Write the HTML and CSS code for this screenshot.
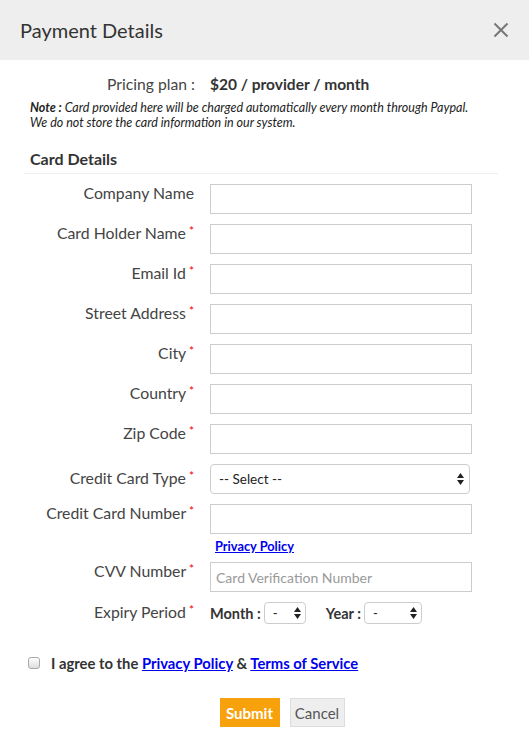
FILE: index.html
```html
<!DOCTYPE html>
<html lang="en">
<head>
    <meta charset="UTF-8">
    <meta name="viewport" content="width=device-width, initial-scale=1.0">
    <title>Payment Details</title>
    <link rel="stylesheet" href="styles.css">
</head>
<body>

<div class="modal">
    <div class="modal-header">
        <h2>Payment Details</h2>
        <button class="close-button" aria-label="Close">
            <svg width="16" height="16" viewBox="0 0 16 16"><path d="M1.5 1.5 L14.5 14.5 M14.5 1.5 L1.5 14.5" stroke="#777" stroke-width="2" fill="none"/></svg>
        </button>
    </div>

    <div class="modal-body">
        <div class="plan">
            <span class="plan-label">Pricing plan :</span>
            <span class="plan-value">$20 / provider / month</span>
        </div>
        <p class="note"><b>Note :</b> Card provided here will be charged automatically every month through Paypal.<br>We do not store the card information in our system.</p>

        <h3 class="section-title">Card Details</h3>

        <form class="card-form">
            <div class="form-row">
                <label>Company Name</label>
                <input type="text">
            </div>
            <div class="form-row">
                <label>Card Holder Name <span class="req">*</span></label>
                <input type="text">
            </div>
            <div class="form-row">
                <label>Email Id <span class="req">*</span></label>
                <input type="text">
            </div>
            <div class="form-row">
                <label>Street Address <span class="req">*</span></label>
                <input type="text">
            </div>
            <div class="form-row">
                <label>City <span class="req">*</span></label>
                <input type="text">
            </div>
            <div class="form-row">
                <label>Country <span class="req">*</span></label>
                <input type="text">
            </div>
            <div class="form-row">
                <label>Zip Code <span class="req">*</span></label>
                <input type="text">
            </div>
            <div class="form-row select-row">
                <label>Credit Card Type <span class="req">*</span></label>
                <div class="select-box wide">
                    <span>-- Select --</span>
                    <svg width="7" height="12" viewBox="0 0 7 12"><path d="M3.5 0 L7 5 L0 5 Z M3.5 12 L7 7 L0 7 Z" fill="#222"/></svg>
                </div>
            </div>
            <div class="form-row number-row">
                <label>Credit Card Number <span class="req">*</span></label>
                <div class="field-stack">
                    <input type="text">
                    <a href="#" class="small-link">Privacy Policy</a>
                </div>
            </div>
            <div class="form-row">
                <label>CVV Number <span class="req">*</span></label>
                <input type="text" placeholder="Card Verification Number">
            </div>
            <div class="form-row expiry-row">
                <label>Expiry Period <span class="req">*</span></label>
                <div class="expiry">
                    <b>Month :</b>
                    <div class="select-box mini month">
                        <span>-</span>
                        <svg width="7" height="12" viewBox="0 0 7 12"><path d="M3.5 0 L7 5 L0 5 Z M3.5 12 L7 7 L0 7 Z" fill="#222"/></svg>
                    </div>
                    <b class="year-label">Year :</b>
                    <div class="select-box mini year">
                        <span>-</span>
                        <svg width="7" height="12" viewBox="0 0 7 12"><path d="M3.5 0 L7 5 L0 5 Z M3.5 12 L7 7 L0 7 Z" fill="#222"/></svg>
                    </div>
                </div>
            </div>
        </form>

        <div class="agree">
            <span class="checkbox"></span>
            <span>I agree to the <a href="#">Privacy Policy</a> &amp; <a href="#">Terms of Service</a></span>
        </div>

        <div class="actions">
            <button class="submit-button">Submit</button>
            <button class="cancel-button">Cancel</button>
        </div>
    </div>
</div>

</body>
</html>
```

FILE: styles.css
```css
body {
    font-family: Lato, "Open Sans", sans-serif;
    background-color: #fff;
    color: #333;
    margin: 0;
    padding: 0;
}
.modal {
    width: 529px;
}
.modal-header {
    background-color: #eeeeee;
    height: 60px;
    display: flex;
    align-items: center;
    justify-content: space-between;
    padding: 0 20px;
}
.modal-header h2 {
    margin: 0;
    font-size: 20px;
    font-weight: normal;
    color: #333;
}
.close-button {
    background: none;
    border: none;
    padding: 0;
    display: flex;
}
.modal-body {
    padding: 14px 24px 0 24px;
}
.plan {
    display: flex;
    align-items: baseline;
    line-height: 20px;
}
.plan-label {
    width: 171px;
    text-align: right;
    font-size: 15.7px;
    color: #444;
}
.plan-value {
    margin-left: 15px;
    font-weight: bold;
    font-size: 15.5px;
    color: #333;
}
.note {
    margin: 6px 0 0 6px;
    font-size: 12.5px;
    font-style: italic;
    line-height: 15px;
    color: #222;
}
.section-title {
    margin: 19px 7px 0 0;
    padding: 0 0 4px 6px;
    font-size: 16px;
    line-height: 20px;
    color: #333;
    border-bottom: 1px solid #eee;
}
.card-form {
    padding-top: 10px;
}
.form-row {
    display: flex;
    align-items: flex-start;
    margin-bottom: 10px;
}
.form-row label {
    width: 170px;
    text-align: right;
    font-size: 15.8px;
    color: #444;
    line-height: 18px;
    flex-shrink: 0;
}
.req {
    color: #e00;
    font-size: 12px;
    position: relative;
    top: -4px;
    margin-left: -1px;
}
.form-row input {
    margin-left: 16px;
    width: 262px;
    height: 30px;
    box-sizing: border-box;
    border: 1px solid #ccc;
    padding: 0 5px;
    font-family: Lato, sans-serif;
    font-size: 14px;
}
.form-row input::placeholder {
    color: #999;
}
.select-row {
    align-items: center;
}
.select-box {
    display: flex;
    align-items: center;
    justify-content: space-between;
    box-sizing: border-box;
    border: 1px solid #ccc;
    border-radius: 4px;
    background: #fff;
    font-size: 13.5px;
    color: #222;
}
.select-box.wide {
    margin-left: 16px;
    width: 260px;
    height: 30px;
    padding: 0 5px 0 8px;
}
.field-stack {
    display: flex;
    flex-direction: column;
    margin-left: 16px;
}
.field-stack input {
    margin-left: 0;
}
.small-link {
    display: block;
    font-size: 12.8px;
    line-height: 16px;
    font-weight: bold;
    color: #0000ee;
    margin: 4px 0 0 5px;
}
.number-row {
    margin-bottom: 8px;
}
.expiry-row {
    align-items: center;
}
.expiry {
    display: flex;
    align-items: center;
    margin-left: 16px;
    font-size: 14.5px;
}
.expiry b {
    margin-right: 3px;
}
.year-label {
    margin-left: 20px;
}
.select-box.mini {
    height: 22px;
    padding: 0 4px 0 8px;
    font-size: 13px;
}
.select-box.month {
    width: 42px;
}
.select-box.year {
    width: 58px;
}
.agree {
    display: flex;
    align-items: center;
    margin: 29px 0 0 4px;
    font-size: 14.8px;
    line-height: 20px;
    font-weight: bold;
}
.agree a {
    color: #0000ee;
}
.checkbox {
    width: 10px;
    height: 10px;
    border: 1px solid #aaa;
    border-radius: 3px;
    background: linear-gradient(#fff, #ddd);
    margin-right: 11px;
}
.actions {
    display: flex;
    justify-content: center;
    gap: 10px;
    margin-top: 25px;
    padding-left: 35px;
}
.submit-button {
    background-color: #f7a10c;
    color: white;
    border: none;
    height: 29px;
    width: 60px;
    padding: 0;
    font-family: Lato, sans-serif;
    font-weight: bold;
    font-size: 15px;
}
.cancel-button {
    background-color: #eeeeee;
    color: #555;
    border: 1px solid #ddd;
    height: 29px;
    width: 55px;
    padding: 0;
    font-family: Lato, sans-serif;
    font-size: 15px;
}
```
